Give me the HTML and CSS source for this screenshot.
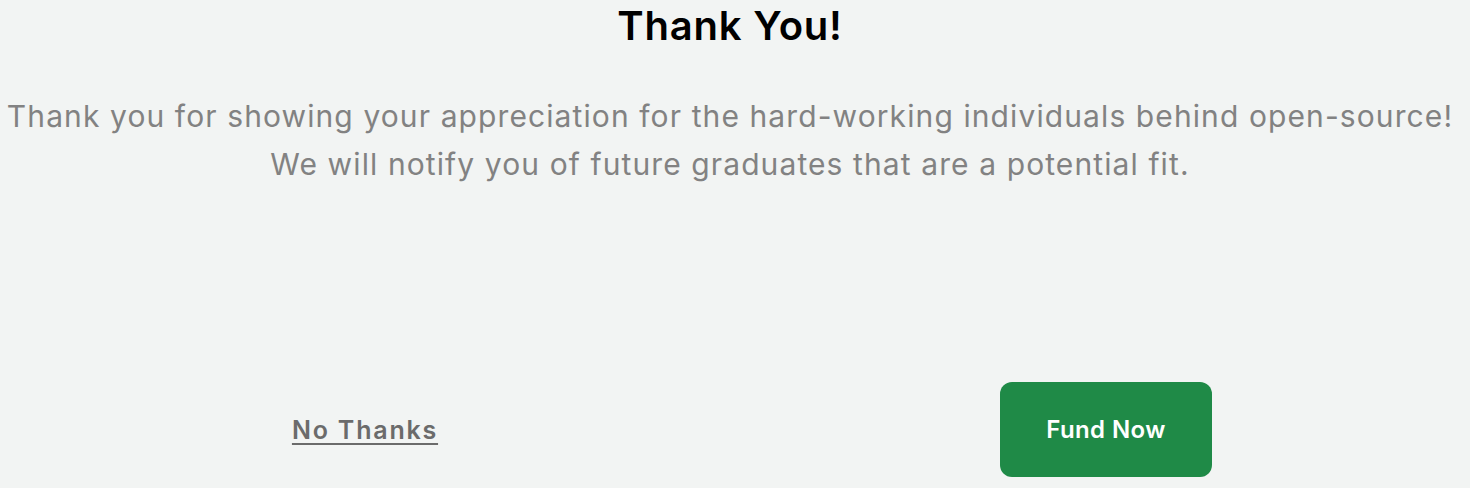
FILE: index.html
```html
<!DOCTYPE html>
<html>
<head>
<meta charset="utf-8">
<link rel="stylesheet" href="styles.css">
</head>
<body>
<main class="panel">
  <h1 class="title">Thank You!</h1>
  <p class="message">Thank you for showing your appreciation for the hard-working individuals behind open-source!<br>We will notify you of future graduates that are a potential fit.</p>
  <div class="actions">
    <a class="link-btn" href="#">No Thanks</a>
    <button class="fund-btn" type="button">Fund Now</button>
  </div>
</main>
</body>
</html>
```
FILE: styles.css
```css
html, body {
  margin: 0;
  padding: 0;
  background: #f2f4f3;
}
body {
  font-family: Inter, "Noto Sans", sans-serif;
  width: 1470px;
  height: 488px;
  overflow: hidden;
}
.panel {
  width: 1460px;
  display: flex;
  flex-direction: column;
  align-items: center;
}
.title {
  margin: 0;
  padding-top: 2px;
  font-size: 40px;
  line-height: 48px;
  font-weight: 600;
  letter-spacing: 0.8px;
  color: #000;
}
.message {
  margin: 42px 0 0;
  font-size: 30px;
  line-height: 48px;
  letter-spacing: 1.1px;
  color: #828282;
  text-align: center;
  white-space: nowrap;
}
.actions {
  margin-top: 194px;
  width: 100%;
  display: grid;
  grid-template-columns: 1fr 1fr;
  align-items: center;
}
.link-btn {
  justify-self: center;
  font-size: 25px;
  font-weight: 600;
  letter-spacing: 1.8px;
  color: #6b6b6b;
  text-decoration: underline;
  text-decoration-thickness: 2px;
  text-underline-offset: 4px;
}
.fund-btn {
  justify-self: center;
  margin-left: 22px;
  width: 212px;
  height: 95px;
  border: none;
  border-radius: 12px;
  background: #1f8a47;
  color: #fff;
  font-family: inherit;
  font-size: 24px;
  font-weight: 600;
  letter-spacing: 0.4px;
}
```
